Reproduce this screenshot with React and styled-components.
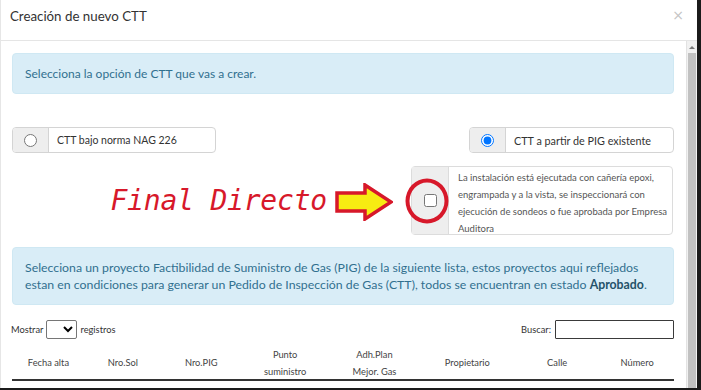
import React, { useState } from 'react';
import styled, { createGlobalStyle } from 'styled-components';

const GlobalStyle = createGlobalStyle`
  html, body {
    margin: 0;
    background: #1b1b1b;
  }
  body {
    font-family: Lato, "Open Sans", sans-serif;
  }
`;

const columns = [
  { label: ['Fecha alta'], w: 73 },
  { label: ['Nro.Sol'], w: 76 },
  { label: ['Nro.PIG'], w: 81 },
  { label: ['Punto', 'suministro'], w: 87 },
  { label: ['Adh.Plan', 'Mejor. Gas'], w: 92 },
  { label: ['Propietario'], w: 94 },
  { label: ['Calle'], w: 86 },
  { label: ['Número'], w: 74 },
];

const App = () => {
  const [tipo, setTipo] = useState('pig');
  const [final, setFinal] = useState(false);

  return (
    <>
      <GlobalStyle />
      <Modal>
        <Header>
          <Title>Creación de nuevo CTT</Title>
          <Close>×</Close>
        </Header>
        <Body>
          <Content>
            <Alert size={12}>Selecciona la opción de CTT que vas a crear.</Alert>

            <RadioRow>
              <InputGroup width={204}>
                <Addon>
                  <input type="radio" checked={tipo === 'nag'} onChange={() => setTipo('nag')} />
                </Addon>
                <GroupLabel size={10.5}>CTT bajo norma NAG 226</GroupLabel>
              </InputGroup>
              <InputGroup width={205}>
                <Addon>
                  <input type="radio" checked={tipo === 'pig'} onChange={() => setTipo('pig')} />
                </Addon>
                <GroupLabel size={10.8}>CTT a partir de PIG existente</GroupLabel>
              </InputGroup>
            </RadioRow>

            <CheckRow>
              <Annotation>Final Directo</Annotation>
              <Arrow width="58" height="38" viewBox="0 0 58 38">
                <path
                  d="M2 10 H30 V2 L56 19 L30 36 V28 H2 Z"
                  fill="#f7ec12"
                  stroke="#d7182a"
                  strokeWidth="3.5"
                  strokeLinejoin="miter"
                />
              </Arrow>
              <CheckGroup>
                <CheckAddon>
                  <input type="checkbox" checked={final} onChange={() => setFinal(!final)} />
                  <Ring />
                </CheckAddon>
                <CheckText>
                  La instalación está ejecutada con cañería epoxi,
                  <br />
                  engrampada y a la vista, se inspeccionará con
                  <br />
                  ejecución de sondeos o fue aprobada por Empresa
                  <br />
                  Auditora
                </CheckText>
              </CheckGroup>
            </CheckRow>

            <Alert size={12.3} spaced>
              Selecciona un proyecto Factibilidad de Suministro de Gas (PIG) de la siguiente lista, estos proyectos aqui reflejados
              <br />
              estan en condiciones para generar un Pedido de Inspección de Gas (CTT), todos se encuentran en estado{' '}
              <b>Aprobado</b>.
            </Alert>

            <Controls>
              <Length>
                Mostrar
                <Select>
                  <option value="10"></option>
                </Select>
                registros
              </Length>
              <Search>
                Buscar:
                <SearchInput type="text" />
              </Search>
            </Controls>

            <TableHead>
              {columns.map((c) => (
                <Th key={c.label[0]} style={{ width: c.w }}>
                  {c.label.map((l) => (
                    <span key={l}>{l}</span>
                  ))}
                </Th>
              ))}
            </TableHead>
          </Content>
          <Scrollbar>
            <ScrollUp />
            <Thumb />
          </Scrollbar>
        </Body>
      </Modal>
    </>
  );
};

const Modal = styled.div`
  width: 697px;
  height: 388px;
  background: #fff;
  display: flex;
  flex-direction: column;
  overflow: hidden;
  box-sizing: border-box;
  border-left: 1px solid #e6e6e6;
`;

const Header = styled.div`
  height: 41px;
  flex-shrink: 0;
  border-bottom: 1px solid #e5e5e5;
  display: flex;
  justify-content: space-between;
  align-items: flex-start;
  padding: 8px 13px 0 9px;
  box-sizing: border-box;
`;

const Title = styled.h4`
  margin: 0;
  font-size: 13.3px;
  line-height: 17px;
  font-weight: 400;
  color: #333;
`;

const Close = styled.span`
  font-size: 14px;
  line-height: 14px;
  color: #c4c4c4;
  font-family: "DejaVu Sans", sans-serif;
`;

const Body = styled.div`
  flex: 1;
  display: flex;
  min-height: 0;
`;

const Content = styled.div`
  flex: 1;
  padding: 12px 12px 0 11px;
  overflow: hidden;
`;

const Alert = styled.div`
  background: #d9edf7;
  border: 1px solid #cfe8f3;
  border-radius: 4px;
  color: #31708f;
  font-size: ${(p) => p.size}px;
  line-height: 17px;
  padding: 11px 12px;
  margin-top: ${(p) => (p.spaced ? '12px' : '0')};
  white-space: nowrap;

  b {
    color: #245269;
    font-weight: 700;
  }
`;

const RadioRow = styled.div`
  margin-top: 33px;
  display: flex;
  justify-content: space-between;
`;

const InputGroup = styled.div`
  width: ${(p) => p.width}px;
  height: 26px;
  box-sizing: border-box;
  border: 1px solid #d4d4d4;
  border-radius: 4px;
  display: flex;
  overflow: hidden;
`;

const Addon = styled.div`
  width: 35px;
  flex-shrink: 0;
  background: #eee;
  border-right: 1px solid #d4d4d4;
  display: flex;
  align-items: center;
  justify-content: center;

  input {
    margin: 0;
    width: 13px;
    height: 13px;
  }
`;

const GroupLabel = styled.div`
  display: flex;
  align-items: center;
  padding-left: 8px;
  font-size: ${(p) => p.size}px;
  color: #333;
`;

const CheckRow = styled.div`
  margin-top: 13px;
  display: flex;
  justify-content: flex-end;
  align-items: center;
  padding-right: 1px;
`;

const Annotation = styled.span`
  font-family: "DejaVu Sans Mono", monospace;
  font-style: italic;
  font-size: 28px;
  color: #d7182a;
  letter-spacing: -0.2px;
  margin-right: 8px;
  line-height: 30px;
`;

const Arrow = styled.svg`
  display: block;
  margin-right: 18px;
  margin-top: 2px;
`;

const CheckGroup = styled.div`
  width: 262px;
  height: 69px;
  box-sizing: border-box;
  border: 1px solid #dcdcdc;
  border-radius: 4px;
  display: flex;
`;

const CheckAddon = styled.div`
  position: relative;
  width: 36px;
  flex-shrink: 0;
  background: #eee;
  border-right: 1px solid #dcdcdc;
  display: flex;
  align-items: center;
  justify-content: center;

  input {
    margin: 0;
    width: 13px;
    height: 13px;
  }
`;

const Ring = styled.div`
  position: absolute;
  left: calc(50% - 3.5px);
  top: 50%;
  width: 43px;
  height: 45px;
  box-sizing: border-box;
  border: 4px solid #d7182a;
  border-radius: 50%;
  transform: translate(-50%, -50%);
  pointer-events: none;
`;

const CheckText = styled.div`
  padding: 2px 8px 0 9px;
  font-size: 9.5px;
  line-height: 17px;
  color: #555;
  white-space: nowrap;
`;

const Controls = styled.div`
  margin-top: 15px;
  margin-left: -1px;
  display: flex;
  justify-content: space-between;
  align-items: center;
  font-size: 9.3px;
  color: #333;
`;

const Length = styled.label`
  display: flex;
  align-items: center;
  gap: 3px;
`;

const Select = styled.select`
  width: 31px;
  height: 19px;
  box-sizing: border-box;
  border: 1px solid #767676;
  border-radius: 2px;
  background: #fff;
  font-size: 10px;
  padding: 0;
`;

const Search = styled.label`
  display: flex;
  align-items: center;
  gap: 4px;
`;

const SearchInput = styled.input`
  width: 119px;
  height: 19px;
  box-sizing: border-box;
  border: 1.5px solid #3a3a3a;
  border-radius: 1px;
  margin: 0;
  padding: 0 4px;
  font-size: 10px;
`;

const TableHead = styled.div`
  margin-top: 7px;
  display: flex;
  height: 33px;
  border-bottom: 2px solid #333;
`;

const Th = styled.div`
  display: flex;
  flex-direction: column;
  align-items: center;
  justify-content: center;
  font-size: 9.3px;
  line-height: 17px;
  color: #444;
  text-align: center;
`;

const Scrollbar = styled.div`
  width: 11px;
  flex-shrink: 0;
  display: flex;
  flex-direction: column;
  background: #f1f1f1;
  border-left: 1px solid #e2e2e2;
  box-sizing: border-box;
`;

const ScrollUp = styled.div`
  height: 12px;
  display: flex;
  align-items: center;
  justify-content: center;

  &::after {
    content: '';
    border-left: 3px solid transparent;
    border-right: 3px solid transparent;
    border-bottom: 3px solid #7a7a7a;
  }
`;

const Thumb = styled.div`
  flex: 1;
  margin: 0 1px;
  background: #c1c1c1;
`;

export default App;
